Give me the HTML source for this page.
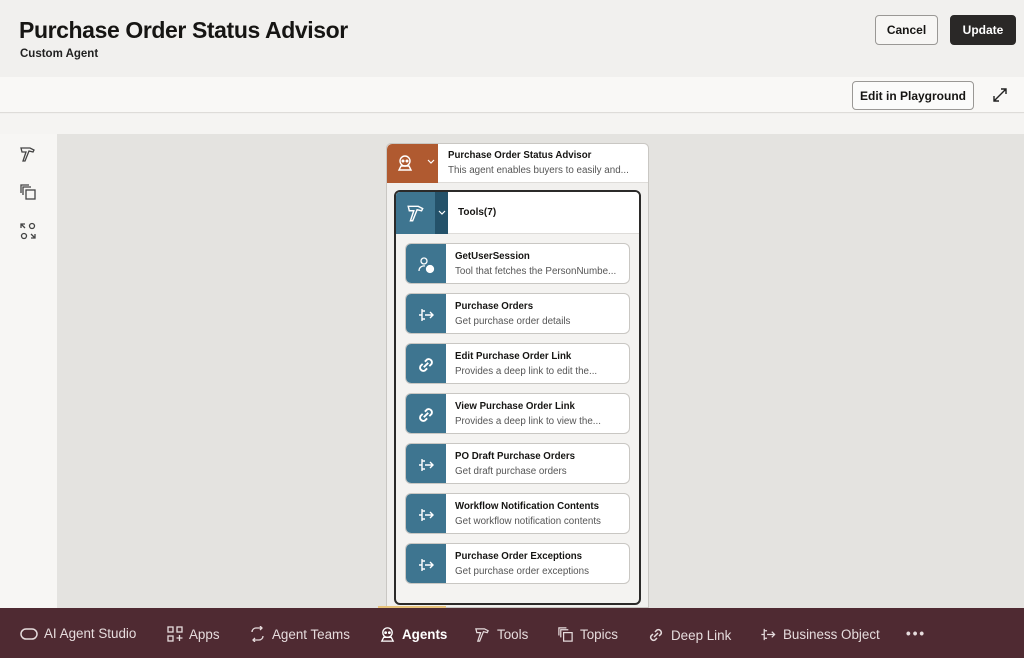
<!DOCTYPE html>
<html><head><meta charset="utf-8"><style>
*{box-sizing:border-box;margin:0;padding:0}
body{width:1024px;height:658px;overflow:hidden;font-family:"Liberation Sans",sans-serif;background:#f1f0ee;position:relative;color:#161513}
.abs{position:absolute}
h1{position:absolute;left:19px;top:17px;font-size:23px;font-weight:bold;letter-spacing:-0.4px}
.sub{left:20px;top:48px;font-size:11.5px;font-weight:bold;color:#222}
.btn{position:absolute;border:1px solid #9a9895;border-radius:4px;background:#f7f6f4;font-size:12px;font-weight:bold;display:flex;align-items:center;justify-content:center}
.tool{position:absolute;left:405px;width:225px;height:41px;background:#fff;border:1px solid #c9c7c3;border-radius:6px;overflow:hidden}
.tool .ic{position:absolute;left:0;top:0;width:40px;height:41px;background:#3e7590;display:flex;align-items:center;justify-content:center}
.tool .t{position:absolute;left:49px;top:7px;font-size:9.7px;font-weight:bold}
.tool .d{position:absolute;left:49px;top:22px;font-size:9.8px;color:#555;white-space:nowrap}
.nav{position:absolute;left:0;top:608px;width:1024px;height:50px;background:#4f2a32;color:#e6dcdd;font-size:13.4px}
.nav span{position:absolute;top:18px;display:flex;align-items:center;gap:6px}
</style></head><body>
<h1>Purchase Order Status Advisor</h1>
<div class="abs sub">Custom Agent</div>
<div class="btn" style="left:875px;top:15px;width:63px;height:30px">Cancel</div>
<div class="btn" style="left:950px;top:15px;width:66px;height:30px;background:#2a2827;color:#fff;border-color:#2a2827">Update</div>
<div class="abs" style="left:0;top:77px;width:1024px;height:36px;background:#f9f8f6;border-bottom:1px solid #dedcd9"></div>
<div class="btn" style="left:852px;top:81px;width:122px;height:29px;background:#fbfbfa">Edit in Playground</div>
<svg class="abs" style="left:992px;top:87px" width="16" height="16" viewBox="0 0 16 16" fill="none" stroke="#222" stroke-width="1.4"><path d="M2 14L14 2M9 2h5v5M2 9v5h5"/></svg>
<div class="abs" style="left:0;top:114px;width:1024px;height:20px;background:#f5f4f2"></div>
<div class="abs" style="left:0;top:134px;width:57px;height:474px;background:#f7f6f4"></div>
<div class="abs" style="left:57px;top:134px;width:967px;height:474px;background:#e4e3e0"></div>
<svg class="abs" style="left:19px;top:145px" width="18" height="18" viewBox="0 0 18 18" fill="none" stroke="#444" stroke-width="1.3"><path d="M2 3h9l4 2-1 2-4-1-4 10H4l3-9H3z"/></svg>
<svg class="abs" style="left:19px;top:183px" width="18" height="18" viewBox="0 0 18 18" fill="none" stroke="#444" stroke-width="1.3"><path d="M2 10V2h8M4 12V4h8"/><rect x="7" y="7" width="9" height="9"/></svg>
<svg class="abs" style="left:19px;top:222px" width="18" height="18" viewBox="0 0 18 18" fill="none" stroke="#444" stroke-width="1.3"><circle cx="13" cy="4" r="2.5"/><circle cx="5" cy="14" r="2.5"/><path d="M2 2l4 4M2 6V2h4M16 16l-4-4M16 12v4h-4"/></svg>

<div class="abs" style="left:386px;top:143px;width:263px;height:465px;background:#f1f0ee;border:1px solid #c9c7c3;border-radius:5px 5px 0 0"></div>
<div class="abs" style="left:387px;top:144px;width:261px;height:39px;background:#fff;border-radius:5px 5px 0 0;border-bottom:1px solid #dedcd9"></div>
<div class="abs" style="left:387px;top:144px;width:51px;height:39px;background:#b05a30;border-radius:5px 0 0 0"></div>
<svg class="abs" style="left:396px;top:154px" width="18" height="18" viewBox="0 0 18 18" fill="none" stroke="#fff" stroke-width="1.4"><circle cx="9" cy="7" r="5"/><circle cx="7" cy="7" r=".8" fill="#fff"/><circle cx="11" cy="7" r=".8" fill="#fff"/><path d="M3 16h12l-2-4H5z"/></svg>
<svg class="abs" style="left:427px;top:159px" width="8" height="6" viewBox="0 0 8 6" fill="none" stroke="#fff" stroke-width="1.2"><path d="M1 1l3 3 3-3"/></svg>
<div class="abs" style="left:448px;top:150px;font-size:9.7px;font-weight:bold">Purchase Order Status Advisor</div>
<div class="abs" style="left:448px;top:165px;font-size:9.8px;color:#555">This agent enables buyers to easily and...</div>

<div class="abs" style="left:394px;top:190px;width:247px;height:415px;border:2px solid #2b2a29;border-radius:6px;background:#f4f3f1"></div>
<div class="abs" style="left:396px;top:192px;width:243px;height:42px;background:#fff;border-bottom:1px solid #dedcd9;border-radius:4px 4px 0 0"></div>
<div class="abs" style="left:396px;top:192px;width:40px;height:42px;background:#3e7590;border-radius:4px 0 0 0"></div>
<div class="abs" style="left:435px;top:192px;width:13px;height:42px;background:#24526a"></div>
<svg class="abs" style="left:406px;top:203px" width="20" height="20" viewBox="0 0 18 18" fill="none" stroke="#fff" stroke-width="1.3"><path d="M2 3h9l4 2-1 2-4-1-4 10H4l3-9H3z"/></svg>
<svg class="abs" style="left:438px;top:210px" width="8" height="6" viewBox="0 0 8 6" fill="none" stroke="#fff" stroke-width="1.2"><path d="M1 1l3 3 3-3"/></svg>
<div class="abs" style="left:458px;top:207px;font-size:10px;font-weight:bold">Tools(7)</div>

<div class="tool" style="top:243px"><div class="ic"><svg width="18" height="18" viewBox="0 0 18 18" fill="none" stroke="#fff" stroke-width="1.3"><circle cx="7" cy="5" r="3"/><path d="M2 15a5 5 0 0 1 6-5"/><circle cx="13" cy="13" r="3.5" fill="#fff"/></svg></div><div class="t">GetUserSession</div><div class="d">Tool that fetches the PersonNumbe...</div></div>
<div class="tool" style="top:293px"><div class="ic"><svg width="18" height="18" viewBox="0 0 18 18" fill="none" stroke="#fff" stroke-width="1.4"><path d="M5 3v12M5 5h3M5 13h3M8 9h8M13 6l3 3-3 3M2 9h3"/></svg></div><div class="t">Purchase Orders</div><div class="d">Get purchase order details</div></div>
<div class="tool" style="top:343px"><div class="ic"><svg width="20" height="20" viewBox="0 0 18 18" fill="none" stroke="#fff" stroke-width="1.7"><path d="M8 6l2-2a3 3 0 0 1 4 4l-2 2M10 12l-2 2a3 3 0 0 1-4-4l2-2M7 11l4-4"/></svg></div><div class="t">Edit Purchase Order Link</div><div class="d">Provides a deep link to edit the...</div></div>
<div class="tool" style="top:393px"><div class="ic"><svg width="20" height="20" viewBox="0 0 18 18" fill="none" stroke="#fff" stroke-width="1.7"><path d="M8 6l2-2a3 3 0 0 1 4 4l-2 2M10 12l-2 2a3 3 0 0 1-4-4l2-2M7 11l4-4"/></svg></div><div class="t">View Purchase Order Link</div><div class="d">Provides a deep link to view the...</div></div>
<div class="tool" style="top:443px"><div class="ic"><svg width="18" height="18" viewBox="0 0 18 18" fill="none" stroke="#fff" stroke-width="1.4"><path d="M5 3v12M5 5h3M5 13h3M8 9h8M13 6l3 3-3 3M2 9h3"/></svg></div><div class="t">PO Draft Purchase Orders</div><div class="d">Get draft purchase orders</div></div>
<div class="tool" style="top:493px"><div class="ic"><svg width="18" height="18" viewBox="0 0 18 18" fill="none" stroke="#fff" stroke-width="1.4"><path d="M5 3v12M5 5h3M5 13h3M8 9h8M13 6l3 3-3 3M2 9h3"/></svg></div><div class="t">Workflow Notification Contents</div><div class="d">Get workflow notification contents</div></div>
<div class="tool" style="top:543px"><div class="ic"><svg width="18" height="18" viewBox="0 0 18 18" fill="none" stroke="#fff" stroke-width="1.4"><path d="M5 3v12M5 5h3M5 13h3M8 9h8M13 6l3 3-3 3M2 9h3"/></svg></div><div class="t">Purchase Order Exceptions</div><div class="d">Get purchase order exceptions</div></div>

<div class="abs" style="left:378px;top:606px;width:68px;height:3px;background:#e8c37a"></div>
<div class="nav">
<span style="left:20px"><svg width="18" height="12" viewBox="0 0 18 12" fill="none" stroke="#e6dcdd" stroke-width="1.5"><rect x="1" y="1" width="16" height="10" rx="5"/></svg>AI Agent Studio</span>
<span style="left:167px"><svg width="16" height="16" viewBox="0 0 16 16" fill="none" stroke="#e6dcdd" stroke-width="1.3"><rect x="1" y="1" width="5" height="5"/><rect x="10" y="1" width="5" height="5"/><rect x="1" y="10" width="5" height="5"/><path d="M12.5 9v6M9.5 12h6"/></svg>Apps</span>
<span style="left:249px"><svg width="17" height="16" viewBox="0 0 17 16" fill="none" stroke="#e6dcdd" stroke-width="1.3"><path d="M3 6a4 4 0 0 1 4-4h6M11 0l2 2-2 2M14 10a4 4 0 0 1-4 4H4M6 16l-2-2 2-2"/></svg>Agent Teams</span>
<span style="left:379px;color:#fff;font-weight:bold"><svg width="17" height="17" viewBox="0 0 18 18" fill="none" stroke="#fff" stroke-width="1.4"><circle cx="9" cy="7" r="5"/><circle cx="7" cy="7" r=".8" fill="#fff"/><circle cx="11" cy="7" r=".8" fill="#fff"/><path d="M3 16h12l-2-4H5z"/></svg>Agents</span>
<span style="left:474px"><svg width="17" height="17" viewBox="0 0 18 18" fill="none" stroke="#e6dcdd" stroke-width="1.3"><path d="M2 3h9l4 2-1 2-4-1-4 10H4l3-9H3z"/></svg>Tools</span>
<span style="left:557px"><svg width="17" height="17" viewBox="0 0 18 18" fill="none" stroke="#e6dcdd" stroke-width="1.3"><path d="M2 10V2h8M4 12V4h8"/><rect x="7" y="7" width="9" height="9"/></svg>Topics</span>
<span style="left:647px"><svg width="18" height="18" viewBox="0 0 18 18" fill="none" stroke="#e6dcdd" stroke-width="1.5"><path d="M8 6l2-2a3 3 0 0 1 4 4l-2 2M10 12l-2 2a3 3 0 0 1-4-4l2-2M7 11l4-4"/></svg>Deep Link</span>
<span style="left:759px"><svg width="18" height="17" viewBox="0 0 18 18" fill="none" stroke="#e6dcdd" stroke-width="1.3"><path d="M5 3v12M5 5h3M5 13h3M8 9h8M13 6l3 3-3 3M2 9h3"/></svg>Business Object</span>
<span style="left:906px;letter-spacing:2px;font-weight:bold">•••</span>
</div>
</body></html>
